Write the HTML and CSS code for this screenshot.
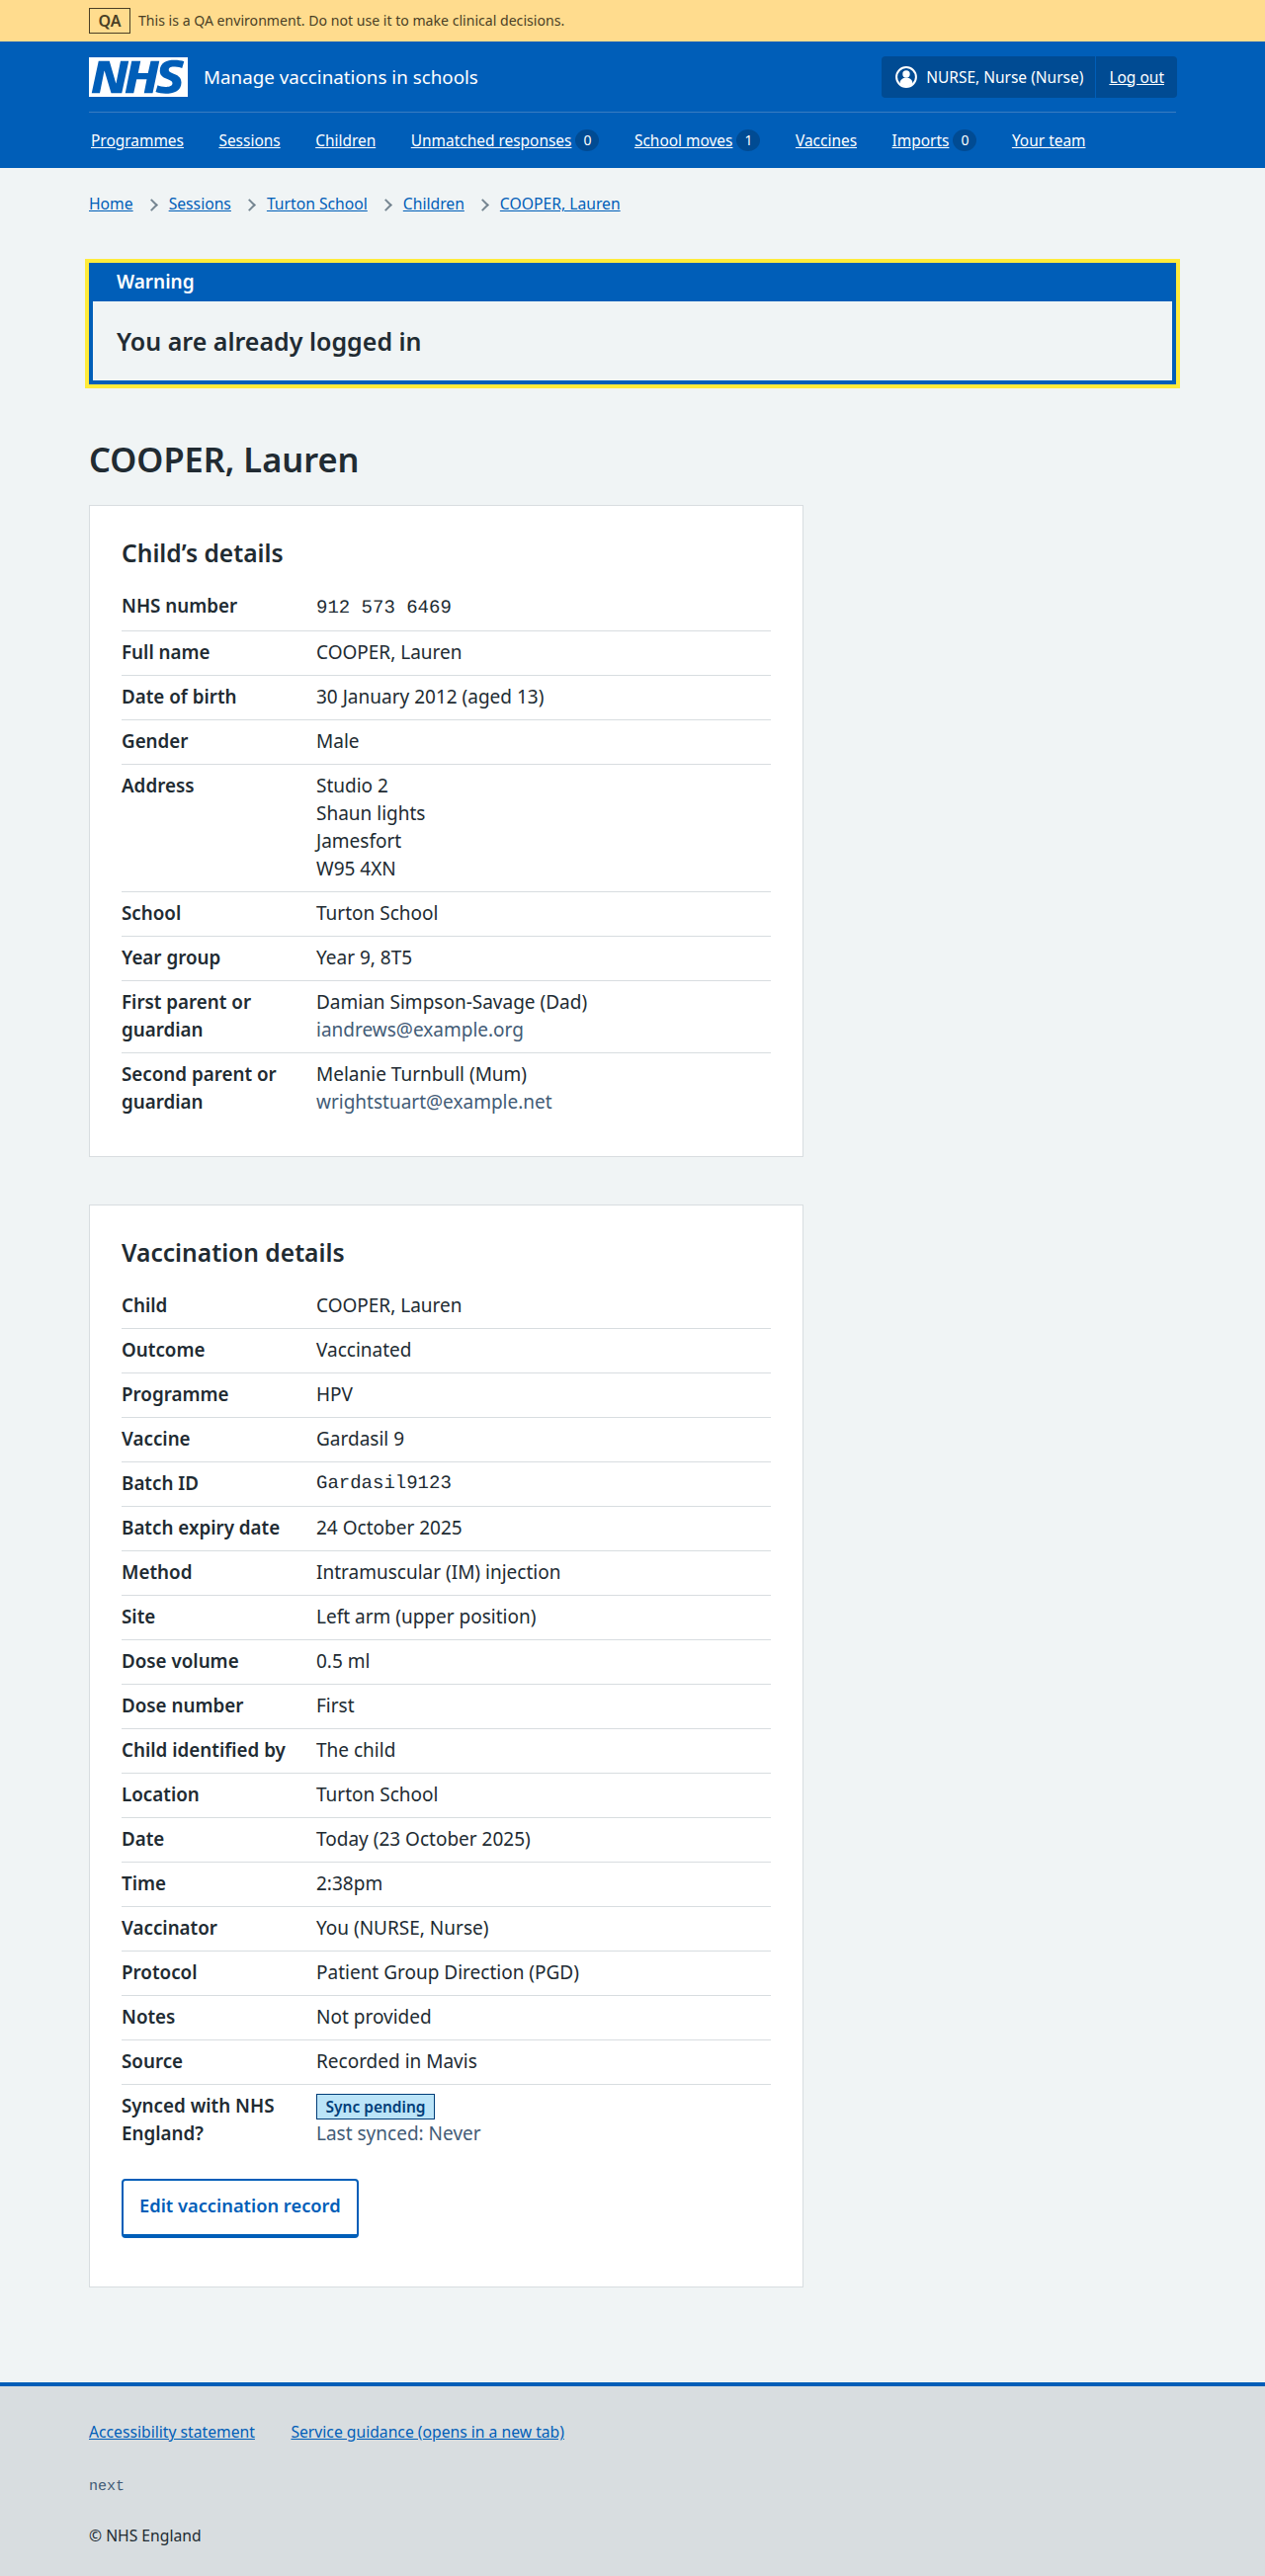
FILE: index.html
```html
<!DOCTYPE html>
<html lang="en">
<head>
	<meta charset="utf-8">
	<title>COOPER, Lauren – Manage vaccinations in schools</title>
	<link rel="stylesheet" href="styles.css">
</head>
<body>
	<div class="env-banner">
		<div class="width-container env-inner">
			<strong class="env-tag">QA</strong>
			<span>This is a QA environment. Do not use it to make clinical decisions.</span>
		</div>
	</div>
	<header class="site-header">
		<div class="width-container">
			<div class="header-top">
				<a class="brand" href="#">
					<svg class="logo" viewBox="0 0 40 16" aria-label="NHS">
						<path fill="#fff" d="M0 0h40v16H0z"></path>
						<path fill="#005eb8" d="M3.9 1.5h4.4l2.6 9h.1l1.8-9h3.3l-2.8 13H9l-2.7-9h-.1l-1.8 9H1.1M17.3 1.5h3.6l-1 4.9h4L25 1.5h3.5l-2.7 13h-3.5l1.1-5.6h-4.1l-1.2 5.6h-3.4M37.7 4.4c-.7-.3-1.6-.6-2.9-.6-1.4 0-2.5.2-2.5 1.3 0 1.8 5.1 1.2 5.1 5.1 0 3.6-3.3 4.5-6.4 4.5-1.3 0-2.9-.3-4-.7l.8-2.7c.7.4 2.1.7 3.2.7s2.8-.2 2.8-1.5c0-2.1-5.1-1.3-5.1-5 0-3.4 2.9-4.4 5.8-4.4 1.6 0 3.1.2 4 .6"></path>
					</svg>
					<span class="service-name">Manage vaccinations in schools</span>
				</a>
				<div class="account">
					<span class="account-user">
						<svg class="account-icon" viewBox="0 0 22 22" aria-hidden="true">
							<circle cx="11" cy="11" r="9.9" fill="none" stroke="#fff" stroke-width="2"></circle>
							<circle cx="11" cy="8" r="3.7" fill="#fff"></circle>
							<path fill="#fff" d="M4.6 17.4c0-3.6 2.7-5.6 6.4-5.6s6.4 2 6.4 5.6c-1.6 1.900-3.900 3-6.400 3s-4.800-1.100-6.400-3z"></path>
						</svg>
						NURSE, Nurse (Nurse)
					</span>
					<a class="account-logout" href="#">Log out</a>
				</div>
			</div>
			<nav class="main-nav">
				<a href="#">Programmes</a>
				<a href="#">Sessions</a>
				<a href="#">Children</a>
				<span class="nav-item"><a href="#">Unmatched responses</a><span class="count">0</span></span>
				<span class="nav-item"><a href="#">School moves</a><span class="count">1</span></span>
				<a href="#">Vaccines</a>
				<span class="nav-item"><a href="#">Imports</a><span class="count">0</span></span>
				<a href="#">Your team</a>
			</nav>
		</div>
	</header>

	<div class="width-container">
		<nav class="breadcrumb">
			<a href="#">Home</a><span class="crumb-sep"></span>
			<a href="#">Sessions</a><span class="crumb-sep"></span>
			<a href="#">Turton School</a><span class="crumb-sep"></span>
			<a href="#">Children</a><span class="crumb-sep"></span>
			<a href="#">COOPER, Lauren</a>
		</nav>

		<main>
			<div class="flash">
				<div class="flash-title">Warning</div>
				<div class="flash-body">You are already logged in</div>
			</div>

			<h1>COOPER, Lauren</h1>

			<section class="card">
				<h2>Child’s details</h2>
				<dl class="summary">
					<div class="row"><dt>NHS number</dt><dd class="mono nhs-number">912 573 6469</dd></div>
					<div class="row"><dt>Full name</dt><dd>COOPER, Lauren</dd></div>
					<div class="row"><dt>Date of birth</dt><dd>30 January 2012 (aged 13)</dd></div>
					<div class="row"><dt>Gender</dt><dd>Male</dd></div>
					<div class="row"><dt>Address</dt><dd>Studio 2<br>Shaun lights<br>Jamesfort<br>W95 4XN</dd></div>
					<div class="row"><dt>School</dt><dd>Turton School</dd></div>
					<div class="row"><dt>Year group</dt><dd>Year 9, 8T5</dd></div>
					<div class="row"><dt>First parent or guardian</dt><dd>Damian Simpson-Savage (Dad)<br><span class="secondary">iandrews@example.org</span></dd></div>
					<div class="row last"><dt>Second parent or guardian</dt><dd>Melanie Turnbull (Mum)<br><span class="secondary">wrightstuart@example.net</span></dd></div>
				</dl>
			</section>

			<section class="card">
				<h2>Vaccination details</h2>
				<dl class="summary">
					<div class="row"><dt>Child</dt><dd>COOPER, Lauren</dd></div>
					<div class="row"><dt>Outcome</dt><dd>Vaccinated</dd></div>
					<div class="row"><dt>Programme</dt><dd>HPV</dd></div>
					<div class="row"><dt>Vaccine</dt><dd>Gardasil 9</dd></div>
					<div class="row"><dt>Batch ID</dt><dd class="mono">Gardasil9123</dd></div>
					<div class="row"><dt>Batch expiry date</dt><dd>24 October 2025</dd></div>
					<div class="row"><dt>Method</dt><dd>Intramuscular (IM) injection</dd></div>
					<div class="row"><dt>Site</dt><dd>Left arm (upper position)</dd></div>
					<div class="row"><dt>Dose volume</dt><dd>0.5 ml</dd></div>
					<div class="row"><dt>Dose number</dt><dd>First</dd></div>
					<div class="row"><dt>Child identified by</dt><dd>The child</dd></div>
					<div class="row"><dt>Location</dt><dd>Turton School</dd></div>
					<div class="row"><dt>Date</dt><dd>Today (23 October 2025)</dd></div>
					<div class="row"><dt>Time</dt><dd>2:38pm</dd></div>
					<div class="row"><dt>Vaccinator</dt><dd>You (NURSE, Nurse)</dd></div>
					<div class="row"><dt>Protocol</dt><dd>Patient Group Direction (PGD)</dd></div>
					<div class="row"><dt>Notes</dt><dd>Not provided</dd></div>
					<div class="row"><dt>Source</dt><dd>Recorded in Mavis</dd></div>
					<div class="row last"><dt>Synced with NHS England?</dt><dd><strong class="tag">Sync pending</strong><br><span class="secondary">Last synced: Never</span></dd></div>
				</dl>
				<a class="button" href="#">Edit vaccination record</a>
			</section>
		</main>
	</div>

	<footer class="site-footer">
		<div class="width-container">
			<div class="footer-links">
				<a href="#">Accessibility statement</a>
				<a href="#">Service guidance (opens in a new tab)</a>
			</div>
			<div class="footer-version">next</div>
			<p class="footer-copy">© NHS England</p>
		</div>
	</footer>
</body>
</html>
```

FILE: styles.css
```css
/* fonts */
body {
	font-family: "Noto Sans", Arial, sans-serif;
	font-size: 19px;
	line-height: 28px;
}

h1 {
	font-size: 34.400px;
	line-height: 44px;
	font-weight: 600;
}

h2 {
	font-size: 24.600px;
	line-height: 32px;
	font-weight: 600;
}

dt {
	font-size: 18.800px;
}

dt,
.flash-title,
.button,
.tag {
	font-weight: 600;
}

.mono,
.footer-version {
	font-family: "Liberation Mono", monospace;
	text-rendering: geometricPrecision;
}

.env-banner {
	font-size: 14.100px;
	line-height: 24px;
}

.service-name {
	font-size: 18.800px;
}

.main-nav {
	font-size: 15.450px;
	line-height: 24px;
}

.breadcrumb {
	font-size: 15.700px;
	line-height: 24px;
}

.account {
	font-size: 15.500px;
	line-height: 24px;
}

.footer-links,
.footer-copy {
	font-size: 15.700px;
	line-height: 24px;
}

/* layout */
* {
	box-sizing: border-box;
}

body {
	margin: 0;
}

.width-container {
	width: 1100px;
	margin: 0 auto;
}

.env-banner {
	height: 42px;
}

.env-inner {
	display: flex;
	align-items: center;
	gap: 8px;
	height: 42px;
}

.env-tag {
	display: block;
	width: 42px;
	height: 26px;
	text-align: center;
	line-height: 24px;
	font-size: 16px;
	font-weight: 600;
}

.site-header {
	height: 128px;
}

.header-top {
	display: flex;
	justify-content: space-between;
	align-items: center;
	height: 72px;
}

.brand {
	display: flex;
	align-items: center;
	gap: 16px;
}

.logo {
	display: block;
	width: 100px;
	height: 40px;
}

.account {
	display: flex;
	align-items: center;
	height: 42px;
	margin-right: -1px;
}

.account-user {
	display: flex;
	align-items: center;
	gap: 9px;
	height: 100%;
	padding: 0 12px 0 14px;
}

.account-logout {
	display: flex;
	align-items: center;
	height: 100%;
	padding: 0 13px;
}

.account-icon {
	width: 22px;
	height: 22px;
}

.main-nav {
	display: flex;
	align-items: center;
	gap: 35.500px;
	height: 56px;
	padding-left: 2px;
}

.nav-item {
	display: flex;
	align-items: center;
	gap: 4px;
}

.count {
	display: block;
	width: 24px;
	height: 22px;
	text-align: center;
	font-size: 14px;
	line-height: 22px;
}

.breadcrumb {
	display: flex;
	align-items: center;
	height: 72px;
}

.crumb-sep {
	position: relative;
	width: 36px;
	height: 12px;
}

.crumb-sep:before {
	content: "";
	position: absolute;
	left: 14px;
	top: 2.500px;
	width: 7px;
	height: 7px;
	border-top: 2px solid #768692;
	border-right: 2px solid #768692;
	transform: rotate(45deg);
}

.flash {
	margin-top: 24px;
}

.flash-title {
	padding: 0 28px;
	height: 39px;
	line-height: 39px;
}

.flash-body {
	padding: 24px;
	font-size: 25px;
	line-height: 32px;
	font-weight: 600;
}

h1 {
	margin: 54px 0 24px;
}

.card {
	width: 723px;
	margin-bottom: 48px;
	padding: 32px;
}

.card:last-child {
	margin-bottom: 96px;
}

h2 {
	margin: 0 0 16px;
}

.summary {
	margin: 0;
}

.row {
	display: flex;
	padding: 7px 0 9px;
}

.nhs-number {
	padding-top: 2px;
}

dt {
	width: 197px;
	padding-right: 24px;
	flex: none;
}

dd {
	margin: 0;
}

.tag {
	display: inline-block;
	width: 120px;
	height: 26px;
	text-align: center;
	font-size: 15.500px;
	line-height: 24px;
}

.button {
	display: inline-block;
	margin-top: 23px;
	margin-bottom: 17px;
	padding: 11px 16px 17px;
	height: 60px;
	font-size: 18.300px;
}

.site-footer {
	height: 200px;
	padding-top: 34px;
}

.footer-links {
	display: flex;
	gap: 36.500px;
}

.footer-version {
	margin-top: 32px;
	font-size: 15px;
	line-height: 24px;
}

.footer-copy {
	margin: 25px 0 0;
}

/* colors */
body {
	background-color: #f0f4f5;
	color: #212b32;
}

a {
	color: #005eb8;
}

.env-banner {
	background-color: #ffdc8e;
	color: #4a3f25;
}

.env-tag {
	border: 1px solid #4a3f25;
}

.site-header {
	background-color: #005eb8;
	color: #fff;
}

.site-header a {
	color: #fff;
}

.brand {
	text-decoration: none;
}

.header-top {
	border-bottom: 1px solid #3a7cc1;
}

.account {
	background-color: #004b93;
	border-radius: 4px;
}

.account-user {
	border-right: 1px solid #005eb8;
}

.count {
	background-color: #004b93;
	border-radius: 50%;
}

.flash {
	border: 4px solid #005eb8;
	outline: 4px solid #ffeb3b;
}

.flash-title {
	margin: -4px -4px 0;
	background-color: #005eb8;
	color: #fff;
}

.card {
	background-color: #fff;
	border: 1px solid #d8dde0;
}

.row {
	border-bottom: 1px solid #d8dde0;
}

.row.last {
	border-bottom: 0;
}

.secondary {
	color: #425b76;
}

.tag {
	background-color: #bbe4f8;
	color: #003d78;
	border: 1px solid #003d78;
}

.button {
	background-color: #fff;
	color: #005eb8;
	text-decoration: none;
	border: 2px solid #005eb8;
	border-bottom-width: 4px;
	border-radius: 4px;
}

.site-footer {
	background-color: #d8dde0;
	border-top: 4px solid #005eb8;
}

.footer-version {
	color: #425b76;
}
```
